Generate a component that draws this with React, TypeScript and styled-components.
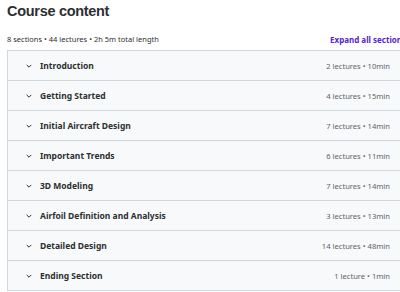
import React from "react";
import styled, { createGlobalStyle } from "styled-components";

const Global = createGlobalStyle`
  html, body { margin: 0; padding: 0; background: #fff; overflow: hidden; }
  body { font-family: "Noto Sans", "Liberation Sans", sans-serif; color: #2d2f31; }
`;

const Page = styled.div`
  width: 399px;
  padding: 0 0 0 7px;
`;

const Title = styled.h2`
  margin: 0;
  padding-top: 1px;
  font-family: "Liberation Sans", Arial, sans-serif;
  font-size: 14.5px;
  line-height: 20px;
  font-weight: 700;
  letter-spacing: -0.3px;
  color: #2d2f31;
`;

const SummaryBar = styled.div`
  display: flex;
  justify-content: space-between;
  align-items: center;
  margin-top: 11px;
  height: 14px;
  margin-bottom: 2px;
`;

const Summary = styled.span`
  font-size: 7.5px;
  color: #2d2f31;
`;

const ExpandAll = styled.button`
  border: 0;
  background: none;
  padding: 0;
  font-family: inherit;
  font-size: 8px;
  font-weight: 700;
  color: #5624d0;
  white-space: nowrap;
  cursor: pointer;
`;

const Panel = styled.div`
  margin-top: 4px;
  border: 1px solid #d1d7dc;
  border-bottom: none;
`;

const Row = styled.div`
  display: flex;
  align-items: center;
  height: 29px;
  padding: 0 15px 0 17px;
  background: #f7f9fa;
  border-bottom: 1px solid #d1d7dc;
`;

const Chevron = styled.svg`
  width: 8px;
  height: 8px;
  flex: none;
  margin-right: 7px;
`;

const SectionTitle = styled.span`
  flex: 1;
  font-size: 8.5px;
  font-weight: 700;
  color: #2d2f31;
`;

const Meta = styled.span`
  font-size: 7.6px;
  color: #5f6468;
`;

const sections = [
  ["Introduction", "2 lectures • 10min"],
  ["Getting Started", "4 lectures • 15min"],
  ["Initial Aircraft Design", "7 lectures • 14min"],
  ["Important Trends", "6 lectures • 11min"],
  ["3D Modeling", "7 lectures • 14min"],
  ["Airfoil Definition and Analysis", "3 lectures • 13min"],
  ["Detailed Design", "14 lectures • 48min"],
  ["Ending Section", "1 lecture • 1min"],
];

export default function App() {
  return (
    <>
      <Global />
      <Page>
        <Title>Course content</Title>
        <SummaryBar>
          <Summary>8 sections • 44 lectures • 2h 5m total length</Summary>
          <ExpandAll>Expand all sections</ExpandAll>
        </SummaryBar>
        <Panel>
          {sections.map(([t, m]) => (
            <Row key={t}>
              <Chevron viewBox="0 0 8 8">
                <path d="M2 3.2 L4 5.2 L6 3.2" fill="none" stroke="#2d2f31" strokeWidth="1" strokeLinecap="round" strokeLinejoin="round" />
              </Chevron>
              <SectionTitle>{t}</SectionTitle>
              <Meta>{m}</Meta>
            </Row>
          ))}
        </Panel>
      </Page>
    </>
  );
}
